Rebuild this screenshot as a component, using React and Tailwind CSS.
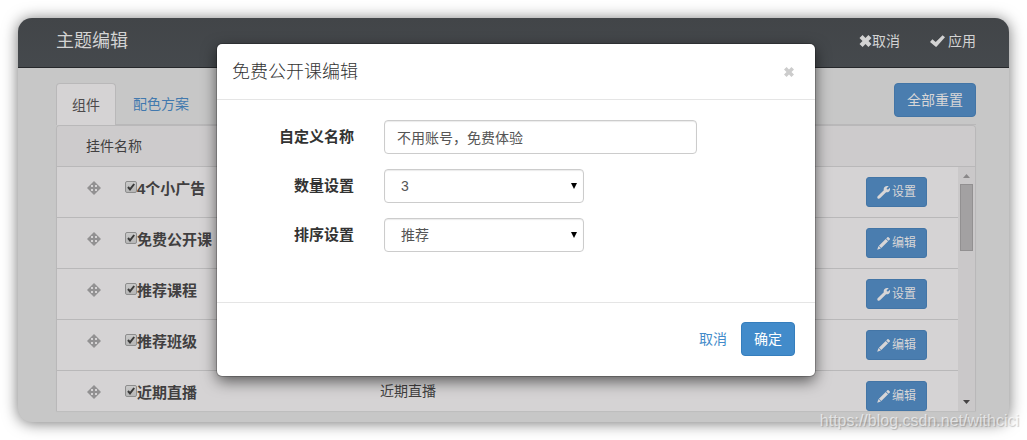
import { useState } from 'react'

const WIDGETS = [
  { id: 'ads', name: '4个小广告', action: 'settings' },
  { id: 'free', name: '免费公开课', action: 'edit' },
  { id: 'courses', name: '推荐课程', action: 'settings' },
  { id: 'classes', name: '推荐班级', action: 'edit' },
  { id: 'live', name: '近期直播', action: 'edit' },
]

function MoveIcon() {
  return (
    <svg viewBox="0 0 14 14" className="w-[14px] h-[14px] fill-[#929192]" aria-hidden="true">
      <path d="M7 0l4 4H8v2h2V3l4 4-4 4V8H8v2h3l-4 4-4-4h3V8H4v3L0 7l4-4v3h2V4H3z" />
    </svg>
  )
}

function WrenchIcon() {
  return (
    <svg viewBox="0 0 13 13" className="w-[13px] h-[13px] fill-current" aria-hidden="true">
      <path d="M7.600.9C8.800 0 10.300-.2 11.700.4L9.700 2.100l.2 1.200 1.200.3L13 1.800c.4 1.300.1 2.700-.9 3.600-.9.8-2 1-3 .8L3 12.300c-.6.6-1.600.7-2.300.1-.6-.6-.6-1.500 0-2.200l6.100-6C6.500 3 6.700 1.700 7.600.9z" />
    </svg>
  )
}

function PencilIcon() {
  return (
    <svg viewBox="0 0 13 13" className="w-[13px] h-[13px] fill-current" aria-hidden="true">
      <path d="M10.200.4c.5-.5 1.100-.5 1.500 0l.9.9c.5.4.5 1 0 1.500l-1 1-2.400-2.400zM8.700 1.900l2.400 2.400-6.800 6.800-2.400-2.400zM1.500 9.100l2.400 2.400L.2 12.800z" />
    </svg>
  )
}

function CrossIcon({ className }) {
  return (
    <svg viewBox="0 0 12 12" className={className} aria-hidden="true">
      <path d="M3.100 0L6 3 8.900 0 12 3.100 9 6l3 2.900L8.900 12 6 9l-2.900 3L0 8.900 3 6 0 3.100z" />
    </svg>
  )
}

function CheckIcon() {
  return (
    <svg viewBox="0 0 15 12" className="w-[15px] h-[12px] fill-current" aria-hidden="true">
      <path d="M12.600.2L15 2.200 6.700 11.600c-.4.4-.9.4-1.300 0L0 7l2.400-2.700 3.300 2.600z" />
    </svg>
  )
}

function Checkbox({ id, checked, onChange }) {
  return (
    <span className="relative mt-1 h-3 w-3 shrink-0">
      <input
        id={id}
        type="checkbox"
        checked={checked}
        onChange={onChange}
        className="block h-3 w-3 appearance-none rounded-[2px] border border-[#8d8d8d] bg-linear-to-b from-[#c9c9c9] to-[#b6b6b6]"
      />
      {checked && (
        <svg viewBox="0 0 12 12" className="pointer-events-none absolute inset-0 h-3 w-3" aria-hidden="true">
          <path d="M3 6l2 2.400L9.200 3" fill="none" stroke="#3b3b3b" strokeWidth="2" />
        </svg>
      )}
    </span>
  )
}

function SelectField({ id, value, onChange, options }) {
  return (
    <div className="relative w-[200px]">
      <select
        id={id}
        value={value}
        onChange={onChange}
        className="block h-[34px] w-full appearance-none rounded border border-[#ccc] bg-white pl-4 pr-6 text-sm text-[#555] shadow-[inset_0_1px_1px_rgba(0,0,0,0.08)]"
      >
        {options.map((option) => (
          <option key={option}>{option}</option>
        ))}
      </select>
      <svg viewBox="0 0 6 6" className="pointer-events-none absolute right-[7px] top-[14px] h-[6px] w-[6px]" aria-hidden="true">
        <path d="M0 0h6L3 6z" fill="#000" />
      </svg>
    </div>
  )
}

function FormRow({ id, label, children }) {
  return (
    <div className="flex items-center gap-[30px]">
      <label htmlFor={id} className="w-[137px] shrink-0 text-right text-[15px] font-bold text-[#333]">
        {label}
      </label>
      {children}
    </div>
  )
}

function EditDialog() {
  const [title, setTitle] = useState('不用账号，免费体验')
  const [count, setCount] = useState('3')
  const [order, setOrder] = useState('推荐')

  return (
    <div
      role="dialog"
      aria-labelledby="dialog-title"
      className="w-[598px] max-w-full rounded-[5px] bg-white shadow-[0_5px_15px_rgba(0,0,0,0.6),0_0_0_1px_rgba(0,0,0,0.2)]"
    >
      <div className="flex h-14 items-center justify-between border-b border-[#e5e5e5] pl-[15px] pr-5">
        <h2 id="dialog-title" className="text-lg font-light text-[#333]">免费公开课编辑</h2>
        <button type="button" aria-label="关闭" className="p-px">
          <CrossIcon className="h-[10px] w-[10px] fill-[#ccc]" />
        </button>
      </div>
      <form className="flex flex-col gap-[15px] pb-[50px] pt-5">
        <FormRow id="custom-name" label="自定义名称">
          <input
            id="custom-name"
            type="text"
            value={title}
            onChange={(e) => setTitle(e.target.value)}
            className="h-[34px] w-[313px] rounded border border-[#ccc] bg-white px-3 text-sm text-[#555] shadow-[inset_0_1px_1px_rgba(0,0,0,0.08)]"
          />
        </FormRow>
        <FormRow id="count" label="数量设置">
          <SelectField id="count" value={count} onChange={(e) => setCount(e.target.value)} options={['3']} />
        </FormRow>
        <FormRow id="order" label="排序设置">
          <SelectField id="order" value={order} onChange={(e) => setOrder(e.target.value)} options={['推荐']} />
        </FormRow>
      </form>
      <div className="flex items-center justify-end border-t border-[#e5e5e5] px-5 pb-5 pt-[19px] text-sm">
        <button type="button" className="px-[14px] text-[#428bca]">取消</button>
        <button type="button" className="h-[34px] rounded border border-[#357ebd] bg-[#428bca] px-3 text-white">
          确定
        </button>
      </div>
    </div>
  )
}

function WidgetRow({ widget }) {
  const [checked, setChecked] = useState(true)
  const id = `widget-${widget.id}`

  return (
    <tr className="h-[51px] align-top">
      <td className="w-[323px] border-b border-[#b9b8b9] pl-[30px] pt-[10px]">
        <div className="flex">
          <span className="mr-6 mt-1">
            <MoveIcon />
          </span>
          <Checkbox id={id} checked={checked} onChange={() => setChecked(!checked)} />
          <label htmlFor={id} className="text-[15px] font-bold leading-6">
            {widget.name}
          </label>
        </div>
      </td>
      <td className="border-b border-[#b9b8b9] pt-[10px] text-sm">{widget.name}</td>
      <td className="border-b border-[#b9b8b9] pr-[31px] pt-[10px]">
        <button
          type="button"
          className="ml-auto flex h-[30px] items-center gap-[2px] rounded-[3px] border border-[#4375a6] bg-[#4a7daf] px-[10px] text-xs text-[#d8d6d7]"
        >
          {widget.action === 'edit' ? <PencilIcon /> : <WrenchIcon />}
          {widget.action === 'edit' ? '编辑' : '设置'}
        </button>
      </td>
    </tr>
  )
}

// Static scroll track shown beside the widget list.
function ScrollTrack() {
  return (
    <div className="flex w-[17px] shrink-0 flex-col items-center bg-[#cac8c9] py-[7px]" aria-hidden="true">
      <svg viewBox="0 0 7 4" className="h-1 w-[7px] fill-[#8a8889]">
        <path d="M0 4h7L3.500 0z" />
      </svg>
      <div className="mt-[6px] h-[67px] w-[13px] border border-[#929091] bg-[#a3a1a2]" />
      <svg viewBox="0 0 7 4" className="mt-auto h-1 w-[7px] fill-[#454344]">
        <path d="M0 0h7L3.500 4z" />
      </svg>
    </div>
  )
}

export default function App() {
  return (
    <div className="relative bg-white p-[18px] font-['Liberation_Sans','Noto_Sans_CJK_SC',sans-serif]">
      <div className="overflow-hidden rounded-[14px] bg-[#c7c7c7] text-[#413f40] shadow-[0_1px_15px_rgba(0,0,0,0.55)]">
        <header className="flex h-[50px] items-center justify-between border-b border-[#26282b] bg-linear-to-b from-[#424548] to-[#45494d] pb-1 pl-[38px] pr-[33px] text-[#d3d3d3]">
          <h1 className="text-lg">主题编辑</h1>
          <div className="flex gap-[30px] text-sm">
            <button type="button" className="flex items-center">
              <CrossIcon className="h-3 w-[13px] fill-current" />
              取消
            </button>
            <button type="button" className="flex items-center gap-[3px]">
              <CheckIcon />
              应用
            </button>
          </div>
        </header>

        <main className="pb-[11px] pl-[38px] pr-[33px] pt-[15px]">
          <div className="flex items-start justify-between border-b border-[#b9b8b9] text-sm">
            <nav className="-mb-px flex">
              <a
                href="#widgets"
                className="flex h-[42px] items-center rounded-t border border-b-0 border-[#b9b8b9] bg-[#d5d3d4] px-[15px] text-[#4c4a4b]"
              >
                组件
              </a>
              <a href="#colors" className="flex h-[42px] items-center px-[17px] text-[#4279ae]">
                配色方案
              </a>
            </nav>
            <button
              type="button"
              className="h-[34px] rounded border border-[#4375a6] bg-[#4a7daf] px-3 text-[#d8d6d7]"
            >
              全部重置
            </button>
          </div>

          <section className="overflow-hidden rounded-t border border-b-0 border-[#b9b8b9] shadow-[0_1px_1px_rgba(0,0,0,0.05)]">
            <h2 id="widget-list" className="flex h-[41px] items-center border-b border-[#b9b8b9] bg-[#cdcbcc] pl-[29px] text-sm">
              挂件名称
            </h2>
            <div className="flex max-h-[244px] overflow-hidden bg-[#d5d3d4]">
              <table aria-labelledby="widget-list" className="w-full border-separate border-spacing-0">
                <tbody>
                  {WIDGETS.map((widget) => (
                    <WidgetRow key={widget.id} widget={widget} />
                  ))}
                </tbody>
              </table>
              <ScrollTrack />
            </div>
          </section>
        </main>
      </div>

      <div className="absolute inset-x-0 top-11 flex justify-center pl-[5px]">
        <EditDialog />
      </div>

      <p className="absolute bottom-[7px] right-2 text-base text-white/60 [text-shadow:1px_1px_1px_rgba(0,0,0,0.2)]">
        https://blog.csdn.net/withcici
      </p>
    </div>
  )
}
